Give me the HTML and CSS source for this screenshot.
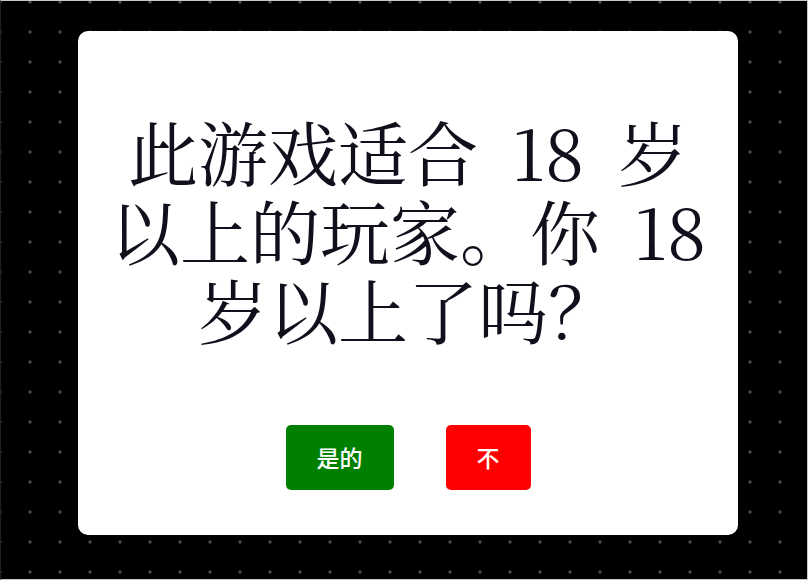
FILE: index.html
```html
<!DOCTYPE html>
<html lang="zh-CN">
<head>
<meta charset="utf-8">
<title>年龄确认</title>
<link rel="stylesheet" href="styles.css">
</head>
<body>
<div class="stage">
  <div class="modal">
    <h1 class="question">此游戏适合 18 岁以上的玩家。你 18 岁以上了吗？</h1>
    <div class="actions">
      <button class="btn btn-yes">是的</button>
      <button class="btn btn-no">不</button>
    </div>
  </div>
</div>
</body>
</html>
```

FILE: styles.css
```css
html, body {
  margin: 0;
  padding: 0;
  height: 100%;
}

body {
  background-color: #000;
  background-image: radial-gradient(circle at 2px 2px, #4a4a4a 1.2px, #2a2a2a 1.6px, transparent 2px);
  background-size: 30px 30px;
  background-position: -2px 0px;
  font-family: "Noto Sans", "Noto Sans CJK SC", sans-serif;
}

.stage {
  box-sizing: border-box;
  height: 100vh;
  padding: 31px 0 0 78px;
  border: 1px solid #c8c8c8;
  border-left-color: #222;
}

.modal {
  box-sizing: border-box;
  width: 660px;
  height: 504px;
  margin-top: -1px;
  margin-left: -1px;
  background: #fff;
  border-radius: 10px;
  padding: 80px 25px 0;
  display: flex;
  flex-direction: column;
  align-items: center;
  gap: 77px;
}

.question {
  margin: 0;
  font-family: "Noto Serif CJK SC", "AR PL UMing CN", "Liberation Serif", serif;
  font-weight: normal;
  font-size: 70px;
  line-height: 79px;
  word-spacing: 16px;
  color: #10101c;
  text-align: center;
}

.actions {
  display: flex;
  gap: 52px;
}

.btn {
  border: none;
  border-radius: 5px;
  color: #fff;
  font-family: "Noto Sans CJK SC", sans-serif;
  font-weight: 500;
  font-size: 23px;
  line-height: 33px;
  padding: 16px 31px;
  cursor: pointer;
}

.btn-yes {
  background: #008000;
}

.btn-no {
  background: #ff0000;
}
```
